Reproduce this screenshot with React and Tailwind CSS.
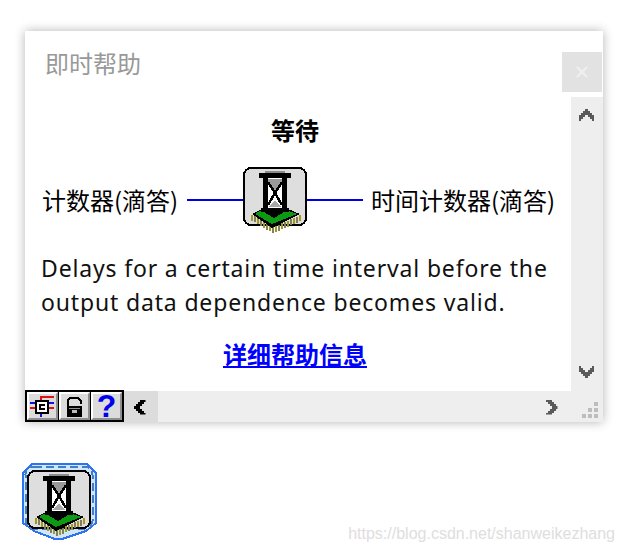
import React from 'react';

const cjk = { fontFamily: '"Noto Sans CJK SC", "Liberation Sans", sans-serif' };

// left and right row of the chip's pins, as x positions
const leftPins = [8, 11, 14, 17, 20, 23, 26, 29];
const rightPins = [32, 35, 38, 41, 44, 47, 50, 53, 56];

function Chevron({ className }) {
    return (
        <svg width="15" height="12" viewBox="0 0 15 12" shapeRendering="crispEdges" className={className}>
            <path d="M6 0h3v2h2v2h2v2h2v6h-2v-2h-2v-2h-2v-2h-3v2h-2v2h-2v2h-2v-6h2v-2h2v-2h2z" fill="currentColor" />
        </svg>
    );
}

// hourglass on a chip, coordinates are pixels of the 64x66 icon
function VIIcon() {
    return (
        <svg width="64" height="66" viewBox="0 0 64 66" shapeRendering="crispEdges" className="block">
            <rect x="1" y="1" width="62" height="57" rx="7" fill="#dedede" stroke="#000" strokeWidth="2" />
            {/* pins */}
            {leftPins.map((x, i) => (
                <rect key={x} x={x} y={47 + (x - 7) * 0.6} width="2" height="6" fill={i % 2 ? '#7d7d6a' : '#a39a12'} />
            ))}
            {rightPins.map((x, i) => (
                <rect key={x} x={x} y={60 - (x - 30) * 0.45} width="2" height="6" fill={i % 2 ? '#7d7d6a' : '#a39a12'} />
            ))}
            {/* chip */}
            <polygon points="9,47 19,42 45,42 57,47 29,61" fill="#000" />
            <polygon points="12,47 17,44 46,44 54,47 29,57" fill="#0b9a12" />
            <polygon points="19,44 43,44 31,51" fill="#000" />
            {/* hourglass frame */}
            <rect x="22" y="4" width="20" height="3" fill="#8c8c8c" />
            <rect x="16" y="6" width="32" height="5" fill="#000" />
            <rect x="20" y="11" width="5" height="31" fill="#000" />
            <rect x="39" y="11" width="5" height="31" fill="#000" />
            <rect x="25" y="11" width="14" height="31" fill="#fff" />
            <rect x="18" y="41" width="28" height="4" fill="#000" />
            {/* sand */}
            <polygon points="25,12 39,12 39,16 32,25 25,16" fill="#9a9a9a" />
            <polygon points="26,40 32,33 38,40" fill="#a8a8a8" />
            <path d="M25 15L32 26L39 15M32 26L25 38M32 26L39 38" stroke="#000" strokeWidth="2.5" fill="none" />
        </svg>
    );
}

function ToolButton({ children }) {
    return (
        <div className="w-[31px] h-[28px] flex items-center justify-center bg-[#dcdcdc] border-t-2 border-l-2 border-t-white border-l-white border-b-2 border-r-2 border-b-[#8f8f8f] border-r-[#8f8f8f]">
            {children}
        </div>
    );
}

export default function App() {
    return (
        <div className="w-[623px] h-[552px] bg-white overflow-hidden pt-[31px] pl-[25px]" style={cjk}>
            <div className="relative w-[578px] h-[391px] flex flex-col bg-white shadow-[0_0_10px_rgba(0,0,0,0.3)]">
                <div className="flex h-[360px]">
                    <div className="w-[546px] flex flex-col">
                        <div className="h-[66px] pl-[20px] pt-[16px] text-[24px] leading-[32px] text-[#999]">即时帮助</div>
                        <div className="text-center text-[24px] leading-[32px] font-bold text-black mr-[6px] mt-[17px]">等待</div>
                        <div className="flex items-center mt-[21px] pl-[17px] h-[66px]">
                            <span className="text-[24px] text-black w-[145px] whitespace-nowrap">计数器(滴答)</span>
                            <div className="w-[56px] h-[2px] bg-[#0000e6]" />
                            <VIIcon />
                            <div className="w-[56px] h-[2px] bg-[#0000e6]" />
                            <span className="text-[24px] text-black ml-[8px] whitespace-nowrap">时间计数器(滴答)</span>
                        </div>
                        <p className="pl-[16px] mt-[18px] text-[23px] leading-[34px] tracking-[0.84px] text-[#111] whitespace-nowrap" style={{ fontFamily: '"Noto Sans", sans-serif' }}>
                            Delays for a certain time interval before the
                            <br />
                            output data dependence becomes valid.
                        </p>
                        <div className="text-center mt-[18px] mr-[6px] text-[24px] leading-[34px]">
                            <a href="#" className="text-[#0000ff] underline font-semibold">详细帮助信息</a>
                        </div>
                    </div>
                    <div className="w-[32px] flex flex-col">
                        <div className="h-[66px]" />
                        <div className="flex-1 bg-[#eeeeee] flex flex-col items-center justify-between pt-[12px] pb-[13px] pr-[2px] text-[#5a5a5a]">
                            <Chevron />
                            <Chevron className="rotate-180" />
                        </div>
                    </div>
                </div>

                <div className="h-[31px] flex bg-[#eeeeee]">
                    <div className="flex bg-black p-[2px] gap-[1px] -mt-[1px] h-[32px]">
                        <ToolButton>
                            <svg width="25" height="23" viewBox="0 0 25 23" shapeRendering="crispEdges" className="shrink-0">
                                <path d="M11 2h13M11 1v5M18 13h6M0 13h6" stroke="#e01010" strokeWidth="2" fill="none" />
                                <path d="M0 8h6M18 8h6M11 18v4" stroke="#1010e0" strokeWidth="2" fill="none" />
                                <rect x="5" y="5" width="14" height="14" fill="#000" />
                                <rect x="7" y="7" width="10" height="10" fill="#fff" />
                                <path d="M9 9h6v2h-4v2h4v2h-6z" fill="#000" />
                            </svg>
                        </ToolButton>
                        <ToolButton>
                            <svg width="21" height="23" viewBox="0 0 21 23" shapeRendering="crispEdges" className="shrink-0">
                                <path d="M4 11V5l2-2h8l3 3v3" stroke="#000" strokeWidth="2" fill="none" />
                                <rect x="3" y="11" width="15" height="11" fill="#000" />
                                <rect x="5" y="13" width="11" height="1" fill="#8f8f8f" />
                                <rect x="8" y="15" width="5" height="3" fill="#bdbdbd" />
                            </svg>
                        </ToolButton>
                        <ToolButton>
                            <span className="text-[#0000f0] text-[32px] leading-[24px] font-bold" style={{ fontFamily: '"Liberation Sans", sans-serif' }}>?</span>
                        </ToolButton>
                    </div>
                    <div className="w-[34px] bg-[#dcdcdc] flex items-center justify-center pr-[4px] text-black">
                        <Chevron className="-rotate-90" />
                    </div>
                    <div className="flex-1 flex items-center justify-end pr-[44px] text-[#5a5a5a]">
                        <Chevron className="rotate-90" />
                    </div>
                    <svg width="17" height="17" viewBox="0 0 17 17" shapeRendering="crispEdges" fill="#bdbdbd" className="absolute right-[5px] bottom-[3px]">
                        <rect x="13" y="0" width="4" height="4" />
                        <rect x="7" y="6" width="4" height="4" />
                        <rect x="13" y="6" width="4" height="4" />
                        <rect x="1" y="12" width="4" height="4" />
                        <rect x="7" y="12" width="4" height="4" />
                        <rect x="13" y="12" width="4" height="4" />
                    </svg>
                </div>
            </div>

            <div className="flex items-end -ml-[3px] mt-[41px] w-[593px]">
                <div className="relative w-[76px] h-[78px]">
                    <svg width="76" height="78" viewBox="0 0 76 78" shapeRendering="crispEdges" className="block">
                        <polygon points="10,1 65,1 74,10 74,60 64,68 40,76 33,76 12,68 1,60 1,10" fill="#cfe6fb" stroke="#2e72f0" strokeWidth="2" />
                        <rect x="3.5" y="3.5" width="67" height="62" rx="8" fill="none" stroke="#3f7fc8" strokeWidth="2" strokeDasharray="8 4" />
                    </svg>
                    <div className="absolute left-[5px] top-[7px]">
                        <VIIcon />
                    </div>
                </div>
                <span className="ml-auto text-[16px] leading-[18px] -mb-[2px] text-[#dedede] whitespace-nowrap" style={{ fontFamily: '"Liberation Sans", sans-serif' }}>
                    https://blog.csdn.net/shanweikezhang
                </span>
            </div>

            <button className="absolute left-[562px] top-[52px] w-[40px] h-[40px] bg-[#e2e2e2] flex items-center justify-center" aria-label="close">
                <svg width="12" height="12" viewBox="0 0 12 12">
                    <path d="M1 1l10 10M11 1L1 11" stroke="#f0f0f0" strokeWidth="2" />
                </svg>
            </button>
        </div>
    );
}
